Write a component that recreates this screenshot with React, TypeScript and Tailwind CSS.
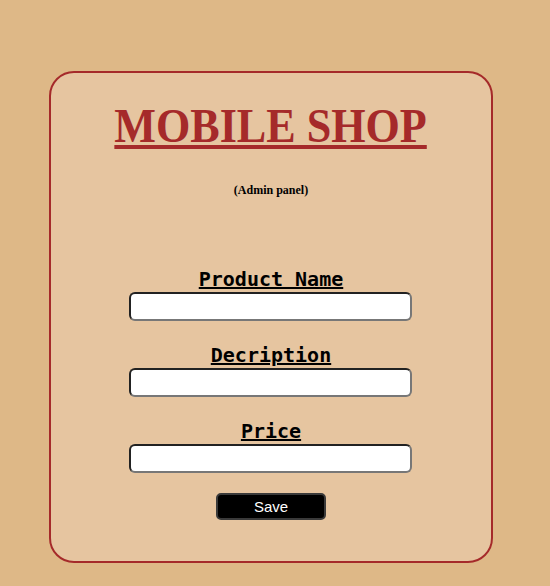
const serif = { fontFamily: '"Liberation Serif", "Times New Roman", serif' }

function Field({ label, first }: { label: string; first?: boolean }) {
  return (
    <div className={first ? 'flex flex-col items-center' : 'mt-[22px] flex flex-col items-center'}>
      <label className="h-[25px] font-['DejaVu_Sans_Mono',monospace] text-[20px] leading-[25px] font-bold text-black underline">
        {label}
      </label>
      <input
        type="text"
        className="ml-[-1px] h-[29px] w-[283px] rounded-[6px] border-2 border-t-[#222] border-r-[#777] border-b-[#777] border-l-[#222] bg-white px-1 outline-none"
      />
    </div>
  )
}

export default function App() {
  return (
    <div className="min-h-[586px] bg-[#deb887] pt-[71px]">
      <div className="ml-[49px] flex h-[492px] w-[444px] flex-col items-center rounded-[25px] border-2 border-[#a52a2a] bg-[#e6c5a0]">
        <h1
          style={serif}
          className="mt-[28px] scale-x-90 text-[49px] leading-none font-bold text-[#a52a2a] underline decoration-[4px] underline-offset-[3px]"
        >
          MOBILE SHOP
        </h1>
        <p style={serif} className="mt-[33px] text-[12px] leading-[14px] font-bold text-black">
          (Admin panel)
        </p>
        <form className="mt-[70px] flex flex-col items-center">
          <Field label="Product Name" first />
          <Field label="Decription" />
          <Field label="Price" />
          <button
            type="button"
            className="mt-[20px] h-[27px] w-[110px] rounded-[5px] border-2 border-[#3a3a3a] bg-black font-['Liberation_Sans',Arial,sans-serif] text-[15px] leading-none text-white"
          >
            Save
          </button>
        </form>
      </div>
    </div>
  )
}
